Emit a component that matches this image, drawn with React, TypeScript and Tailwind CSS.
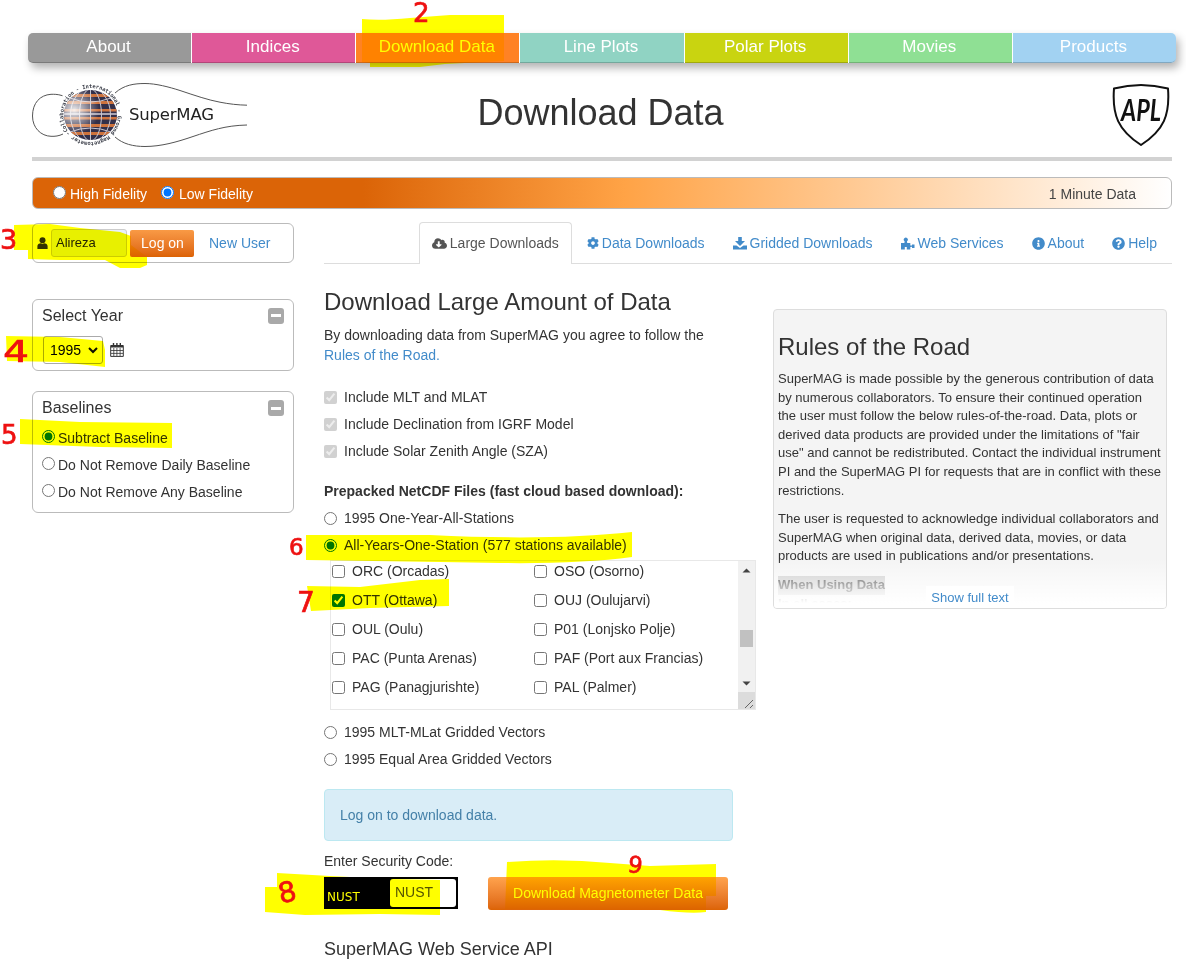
import React from "react";
import {
  FaCloudDownloadAlt,
  FaCog,
  FaInfoCircle,
  FaQuestionCircle,
} from "react-icons/fa";

const navItems = [
  { label: "About", color: "bg-[#999999] rounded-l-[5px]" },
  { label: "Indices", color: "bg-[#df5898]" },
  { label: "Download Data", color: "bg-[#ff8224]" },
  { label: "Line Plots", color: "bg-[#90d3c3]" },
  { label: "Polar Plots", color: "bg-[#c9d410]" },
  { label: "Movies", color: "bg-[#8fe094]" },
  { label: "Products", color: "bg-[#a2d2f2] rounded-r-[5px]" },
];

const stations = [
  ["ORC (Orcadas)", "OSO (Osorno)"],
  ["OTT (Ottawa)", "OUJ (Oulujarvi)"],
  ["OUL (Oulu)", "P01 (Lonjsko Polje)"],
  ["PAC (Punta Arenas)", "PAF (Port aux Francias)"],
  ["PAG (Panagjurishte)", "PAL (Palmer)"],
];

function SuperMagLogo() {
  return (
    <svg width="216" height="68" viewBox="0 0 216 68" className="block overflow-visible">
      <defs>
        <clipPath id="globe">
          <ellipse cx="58.5" cy="32" rx="26.5" ry="25" />
        </clipPath>
        <radialGradient id="shine" cx="0.2" cy="0.4" r="0.45">
          <stop offset="0" stopColor="#fff" stopOpacity="0.9" />
          <stop offset="1" stopColor="#fff" stopOpacity="0" />
        </radialGradient>
        <path id="ring" d="M36 47.8A27.5 27.5 0 0 1 81 16.2A27.5 27.5 0 0 1 36 47.8" />
      </defs>
      <g fill="none" stroke="#555" strokeWidth="1">
        <path d="M30.5 12.7C25 11 22 11.3 19 11.3C8 12 .5 20 .5 33C.5 45 9 53 19 53.3C23 53.5 27 53 31 51" />
        <path d="M83 10C92 2 102 .5 113 .5C124 .5 137 4 148 7.5C163 12.5 176 17 188 19.2C197 21 206 22 215 22.2" />
        <path d="M83 54C91 61 101 63.5 113 63.5C129 63.5 145 59 161 53.5C179 47.5 193 42.5 215 42" />
      </g>
      <g clipPath="url(#globe)">
        <rect x="31" y="6" width="56" height="53" fill="#34304a" />
        <g fill="#cf733d">
          <rect x="31" y="11" width="56" height="3" />
          <rect x="31" y="18" width="56" height="3" />
          <rect x="31" y="26" width="56" height="2.5" />
          <rect x="31" y="34" width="56" height="2.5" />
          <rect x="31" y="41" width="56" height="3" />
          <rect x="31" y="49" width="56" height="3" />
        </g>
        <rect x="31" y="30" width="56" height="2" fill="#aaa5b3" />
        <g fill="none" stroke="#cac6d0" strokeWidth="1">
          <path d="M58.5 6V58" />
          <ellipse cx="58.5" cy="32" rx="11" ry="26" />
          <ellipse cx="58.5" cy="32" rx="20" ry="27" />
          <path d="M38 15Q58 23 79 15M38 49Q58 41 79 49" />
        </g>
        <rect x="31" y="6" width="56" height="53" fill="url(#shine)" />
      </g>
      <text fontSize="5.4" fontWeight="bold" fill="#3a3d48" fontFamily="DejaVu Sans Mono, monospace">
        <textPath href="#ring" textLength="169">
          Collaboration - International - Ground Magnetometer -
        </textPath>
      </text>
      <text x="97" y="37" fontSize="16.5" fill="#222" textLength="85" fontFamily="DejaVu Sans, sans-serif">
        SuperMAG
      </text>
    </svg>
  );
}

function AplLogo() {
  return (
    <svg width="58" height="64" viewBox="0 0 58 64" className="mr-[2px] block">
      <path
        d="M2 5.5C19 1 39 1 56 5.5C58 32 52 47 29 62C6 47 0 32 2 5.5Z"
        fill="none"
        stroke="#111"
        strokeWidth="2"
        strokeLinejoin="round"
      />
      <text
        x="9"
        y="38"
        fontSize="31"
        fontWeight="bold"
        fontStyle="italic"
        textLength="40"
        lengthAdjust="spacingAndGlyphs"
        fill="#111"
        fontFamily="Lato, sans-serif"
      >
        APL
      </text>
    </svg>
  );
}

function UserIcon() {
  return (
    <svg width="11" height="13" viewBox="0 0 11 13" fill="#333">
      <circle cx="5.5" cy="3.2" r="3" />
      <path d="M0.4 12V9.2C.4 7 2 6.6 4 6.2L5.5 7L7 6.2C9 6.6 10.6 7 10.6 9.2V12Z" />
    </svg>
  );
}

function CalendarIcon() {
  return (
    <svg width="14" height="14" viewBox="0 0 14 14" fill="none" stroke="#333">
      <path d="M.7 2.5H13.3V13.4H.7Z" />
      <path d="M1 3.5H13" strokeWidth="2" />
      <path d="M3.5 0V3M6.9 0V3M10.3 0V3" strokeWidth="1.4" />
      <path d="M3.8 5V13M6.9 5V13M10.1 5V13M1 7.5H13M1 10.4H13" strokeWidth=".8" />
    </svg>
  );
}

function SaveIcon() {
  return (
    <svg width="14" height="13" viewBox="0 0 14 13" fill="currentColor">
      <path d="M5.2 0H8.8V4H12L7 9L2 4H5.2Z" />
      <path d="M0 8.6H3.5L7 11L10.5 8.6H14V12.4H0Z" />
    </svg>
  );
}

function ServiceIcon() {
  return (
    <svg width="14" height="13" viewBox="0 0 14 13" fill="currentColor">
      <path d="M0 6H3.4L3.6 4.2A2 2 0 1 1 6 4.2L6.2 6H9.3V8.4L11 8.6V7.5H13.5V11H11V9.8L9.3 10V12.5H5.8V10H3.8V12.5H0Z" />
    </svg>
  );
}

function CollapseIcon() {
  return (
    <span className="flex size-4 items-center justify-center rounded-[3px] bg-[#a9a9a9]">
      <span className="h-[3px] w-[10px] bg-white" />
    </span>
  );
}

function Tab({ icon, label, active }: { icon: React.ReactNode; label: string; active?: boolean }) {
  return (
    <div
      className={
        active
          ? "mr-[2px] flex h-[42px] items-center gap-[3px] rounded-t border border-b-0 border-[#ddd] bg-white px-3 pb-px text-[#555]"
          : "mr-[2px] flex h-[42px] items-center gap-[3px] border border-transparent px-3 text-[#428bca]"
      }
    >
      {icon}
      <span>{label}</span>
    </div>
  );
}

function Radio({ name, label, checked, tight }: { name: string; label: string; checked?: boolean; tight?: boolean }) {
  return (
    <label className="flex h-[27px] items-center">
      <input
        type="radio"
        name={name}
        defaultChecked={checked}
        className={tight ? "relative -top-px mr-[3px] size-[13px] shrink-0" : "mr-[7px] size-[13px] shrink-0"}
      />
      <span className={tight ? "" : "pb-[2px]"}>{label}</span>
    </label>
  );
}

function Annotations() {
  return (
    <>
      <svg
        width="1186"
        height="965"
        viewBox="0 0 1186 965"
        fill="#ffff00"
        className="pointer-events-none absolute top-0 left-0 mix-blend-multiply"
      >
        <path d="M362 19Q380 21 410 18L450 15H504V61L445 64L420 67H370V63L362 62Z" />
        <path d="M14 225L50 224L80 228L120 232L131 236V245L147 257V265L140 268H120L105 260L60 260L28 259V250H14Z" />
        <path d="M6 336L60 337L103 341L105 350V367L60 362L7 361Z" />
        <path d="M20 419L80 422L172 423V448L100 447L20 444Z" />
        <path d="M306 535H430Q550 541 632 532V557Q580 564 500 563L440 562L306 560Z" />
        <path d="M307 586L360 587L420 580L449 579V606L370 608L311 611Z" />
        <path d="M277 873L330 876L390 879L440 880V915L380 914L305 915L265 912V887H277Z" />
        <path d="M507 862Q560 858 610 863L650 866L716 864V896H706V912Q690 914 660 910H595L560 909H505Z" />
      </svg>
      <svg
        width="1186"
        height="965"
        viewBox="0 0 1186 965"
        fill="#ee1111"
        stroke="#ee1111"
        strokeWidth="0.7"
        fontFamily="DejaVu Sans, sans-serif"
        className="pointer-events-none absolute top-0 left-0"
      >
        <text x="413" y="22" fontSize="26">2</text>
        <text x="0" y="249" fontSize="27">3</text>
        <text x="3" y="362" fontSize="30" textLength="26" lengthAdjust="spacingAndGlyphs">4</text>
        <text x="1" y="444" fontSize="26">5</text>
        <text x="289" y="555" fontSize="23">6</text>
        <text x="297" y="612" fontSize="28">7</text>
        <text x="278" y="902" fontSize="28" transform="rotate(-12 286 891)">8</text>
        <text x="628" y="873" fontSize="23" transform="rotate(8 636 865)">9</text>
      </svg>
    </>
  );
}

export default function App() {
  return (
    <div className="relative h-[965px] w-[1186px] overflow-hidden bg-white font-['Liberation_Sans',Arial,sans-serif] text-[14px] leading-5 text-[#333]">
      <nav className="mt-[33px] ml-[28px] flex h-[30px] w-[1148px] gap-px rounded-[5px] shadow-[3px_5px_9px_rgba(0,0,0,0.3)]">
        {navItems.map((item) => (
          <div
            key={item.label}
            className={`${item.color} flex flex-1 items-start justify-center border-b border-black/20 pt-[4px] pr-[2px] text-[17px] text-white`}
          >
            {item.label}
          </div>
        ))}
      </nav>

      <header className="mx-[32px] mt-5 flex h-[74px] w-[1140px] items-start justify-between">
        <SuperMagLogo />
        <h1 className="mr-[159px] pt-[10px] text-[36px] leading-10">Download Data</h1>
        <AplLogo />
      </header>
      <div className="ml-8 h-1 w-[1140px] bg-[#d2d2d2]" />

      <div className="mt-4 ml-8 flex h-8 w-[1140px] items-center rounded-md border border-[#bbb] bg-[linear-gradient(90deg,#db6407_0%,#db6407_29%,#ffa346_52%,#ffffff_100%)] pl-5 text-white">
        <label className="flex items-center gap-[4px]">
          <input type="radio" name="fidelity" className="relative -top-px size-[13px]" />
          <span className="pt-[2px]">High Fidelity</span>
        </label>
        <label className="ml-[14px] flex items-center gap-[5px]">
          <input type="radio" name="fidelity" defaultChecked className="relative -top-px size-[13px]" />
          <span className="pt-[2px]">Low Fidelity</span>
        </label>
        <span className="mr-[35px] ml-auto pt-[2px] text-[#444]">1 Minute Data</span>
      </div>

      <div className="flex pl-8">
        <aside className="w-[262px] pt-[14px]">
          <section className="flex h-10 items-center rounded-md border border-[#bbb] pl-1">
            <UserIcon />
            <div className="ml-[3px] flex h-7 w-[76px] items-center rounded-[3px] border border-[#ccc] bg-[#e8f0fe] pb-px pl-[4px] text-[13px] text-[#222]">
              Alireza
            </div>
            <button className="ml-[3px] h-[27px] w-16 rounded-[2px] bg-linear-to-b from-[#f99a45] to-[#dc6203] pl-px text-white">
              Log on
            </button>
            <a className="ml-[15px] text-[#428bca]">New User</a>
          </section>

          <section className="mt-9 h-[72px] rounded-md border border-[#bbb] pr-[9px] pl-[9px]">
            <div className="flex h-[31px] items-center justify-between text-[16px]">
              <h4>Select Year</h4>
              <CollapseIcon />
            </div>
            <div className="mt-[5px] flex items-center gap-[7px]">
              <div className="ml-[1px] flex h-[28px] w-[60px] items-center justify-between rounded-[3px] border border-[#aaa] pr-[4px] pl-[6px] text-black">
                1995
                <svg width="10" height="7" viewBox="0 0 10 7" fill="none" stroke="#111" strokeWidth="2">
                  <path d="M1 1L5 5L9 1" />
                </svg>
              </div>
              <CalendarIcon />
            </div>
          </section>

          <section className="mt-5 h-[122px] rounded-md border border-[#bbb] pr-[9px] pl-[9px]">
            <div className="flex h-8 items-center justify-between text-[16px]">
              <h4>Baselines</h4>
              <CollapseIcon />
            </div>
            <Radio name="baseline" label="Subtract Baseline" checked tight />
            <Radio name="baseline" label="Do Not Remove Daily Baseline" tight />
            <Radio name="baseline" label="Do Not Remove Any Baseline" tight />
          </section>
        </aside>

        <div className="ml-[30px] w-[848px] pt-[13px]">
          <div className="flex h-[42px] justify-end border-b border-[#ddd]">
            <Tab active icon={<FaCloudDownloadAlt size={15} />} label="Large Downloads" />
            <Tab icon={<FaCog size={12} />} label="Data Downloads" />
            <Tab icon={<SaveIcon />} label="Gridded Downloads" />
            <Tab icon={<ServiceIcon />} label="Web Services" />
            <Tab icon={<FaInfoCircle size={13} />} label="About" />
            <Tab icon={<FaQuestionCircle size={13} />} label="Help" />
          </div>

          <div className="flex">
            <main className="w-[449px] shrink-0">
              <h2 className="mt-[25px] text-[24px] leading-[26px]">Download Large Amount of Data</h2>
              <p className="mt-[10px] w-[400px]">
                By downloading data from SuperMAG you agree to follow the{" "}
                <a className="text-[#428bca]">Rules of the Road.</a>
              </p>

              <div className="mt-[19px]">
                {["Include MLT and MLAT", "Include Declination from IGRF Model", "Include Solar Zenith Angle (SZA)"].map(
                  (label) => (
                    <label key={label} className="flex h-[27px] items-center gap-[7px]">
                      <input type="checkbox" defaultChecked disabled className="size-[13px]" />
                      <span className="pb-[2px]">{label}</span>
                    </label>
                  ),
                )}
              </div>

              <p className="mt-4 font-bold">Prepacked NetCDF Files (fast cloud based download):</p>
              <div className="mt-[4px]">
                <Radio name="product" label="1995 One-Year-All-Stations" />
                <Radio name="product" label="All-Years-One-Station (577 stations available)" checked />
              </div>

              <div className="mt-[1px] ml-[6px] flex h-[150px] w-[426px] overflow-hidden border border-[#e8e8e8]">
                <div className="-mt-[4px] w-[407px]">
                  {stations.map((row) => (
                    <div key={row[0]} className="flex h-[29px]">
                      {row.map((station) => (
                        <label key={station} className="flex w-[202px] items-center gap-[7px] pl-[1px]">
                          <input
                            type="checkbox"
                            defaultChecked={station === "OTT (Ottawa)"}
                            className="size-[13px]"
                          />
                          <span className="pb-[2px]">{station}</span>
                        </label>
                      ))}
                    </div>
                  ))}
                </div>
                <svg width="17" height="148" viewBox="0 0 17 148" className="shrink-0">
                  <rect width="17" height="148" fill="#f1f1f1" />
                  <path d="M4.5 11.5L8.5 7.5L12.5 11.5Z" fill="#444" />
                  <path d="M4.5 120.5L8.5 124.5L12.5 120.5Z" fill="#444" />
                  <rect x="2" y="69" width="13" height="17" fill="#c1c1c1" />
                  <rect y="131" width="17" height="17" fill="#dcdcdc" />
                  <path d="M7 147L15 139M12 147L15 144" stroke="#666" />
                </svg>
              </div>

              <div className="mt-[9px]">
                <Radio name="product" label="1995 MLT-MLat Gridded Vectors" />
                <Radio name="product" label="1995 Equal Area Gridded Vectors" />
              </div>

              <div className="mt-4 flex h-[52px] w-[409px] items-center rounded border border-[#bce8f1] bg-[#d9edf7] pl-[15px] text-[#4480a8]">
                Log on to download data.
              </div>

              <p className="mt-[10px]">Enter Security Code:</p>
              <div className="mt-[6px] flex items-start">
                <div className="flex h-8 w-[134px] items-center bg-black">
                  <span className="w-[66px] pt-[7px] pl-[3px] font-['DejaVu_Sans',sans-serif] text-[12px] text-white">
                    NUST
                  </span>
                  <span className="flex h-7 w-[66px] items-center rounded-[3px] bg-white pb-[2px] pl-[5px] text-[#555]">
                    NUST
                  </span>
                </div>
                <button className="ml-[30px] h-[33px] w-60 rounded-[3px] bg-linear-to-b from-[#ffa34d] to-[#dc6304] pb-[2px] text-white">
                  Download Magnetometer Data
                </button>
              </div>
              <h3 className="mt-[29px] text-[18px]">SuperMAG Web Service API</h3>
            </main>

            <aside className="relative mt-[45px] h-[300px] w-[394px] overflow-hidden rounded border border-[#ddd] bg-[#f4f4f4] px-[4px] text-[13px] leading-[18.6px]">
              <h2 className="mt-[24px] text-[24px] leading-[26px]">Rules of the Road</h2>
              <p className="mt-[10px] whitespace-nowrap">
                SuperMAG is made possible by the generous contribution of data
                <br />
                by numerous collaborators. To ensure their continued operation
                <br />
                the user must follow the below rules-of-the-road. Data, plots or
                <br />
                derived data products are provided under the limitations of "fair
                <br />
                use" and cannot be redistributed. Contact the individual instrument
                <br />
                PI and the SuperMAG PI for requests that are in conflict with these
                <br />
                restrictions.
              </p>
              <p className="mt-[10px] whitespace-nowrap">
                The user is requested to acknowledge individual collaborators and
                <br />
                SuperMAG when original data, derived data, movies, or data
                <br />
                products are used in publications and/or presentations.
              </p>
              <p className="mt-[10px] font-bold">
                <span className="inline-block bg-[#c8c8c8]">When Using Data</span>
                <br />
                In all cases:
              </p>
              <div className="absolute inset-x-0 bottom-0 flex h-[50px] items-end justify-center bg-linear-to-b from-white/0 to-white to-90%">
                <a className="flex h-[22px] w-[88px] items-center justify-center bg-white pt-[2px] text-[#428bca]">
                  Show full text
                </a>
              </div>
            </aside>
          </div>
        </div>
      </div>
      <Annotations />
    </div>
  );
}
